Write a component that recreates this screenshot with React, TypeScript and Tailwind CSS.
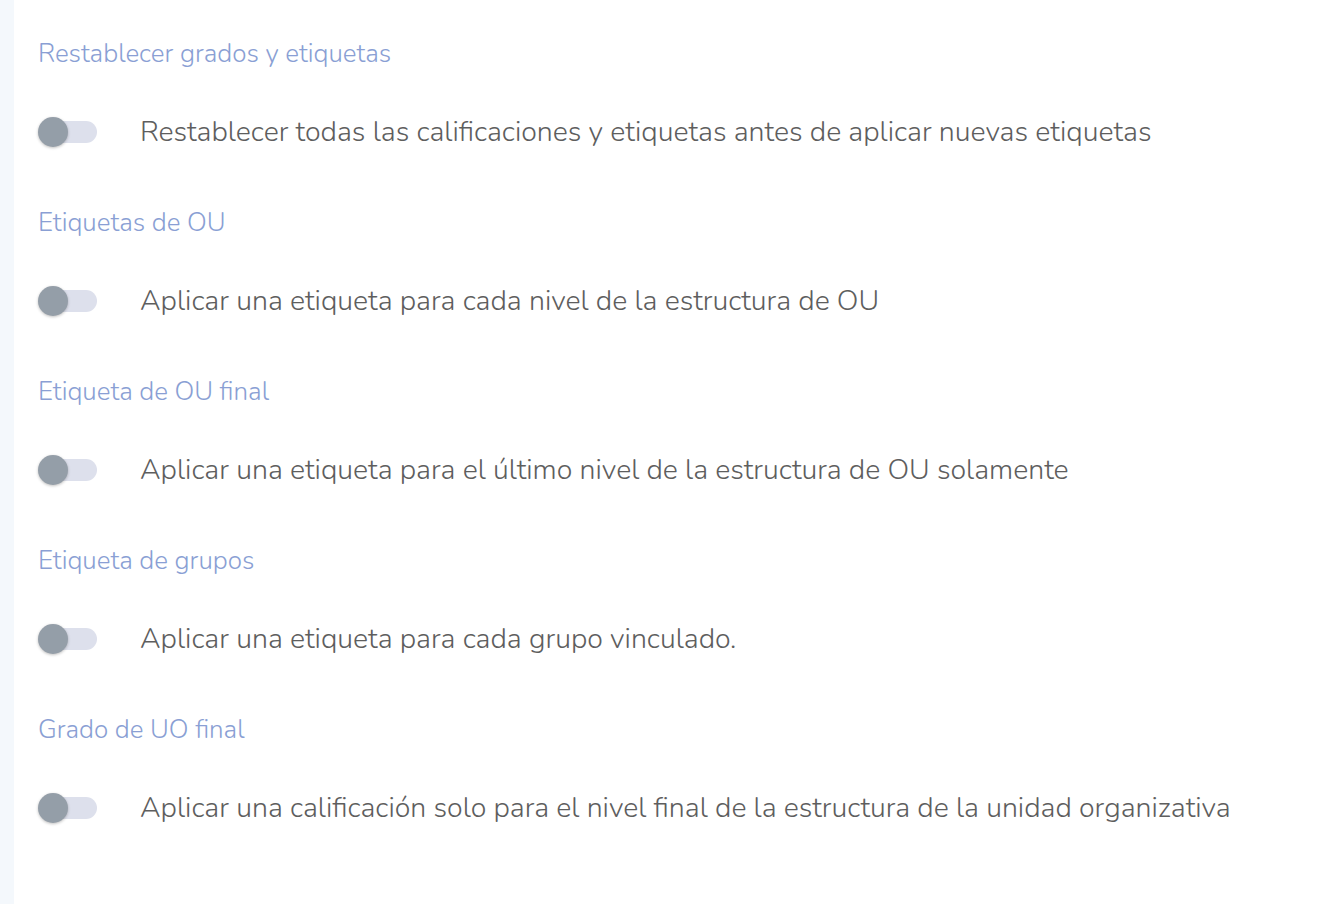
import React from "react";

const items = [
  { h: "Restablecer grados y etiquetas", d: "Restablecer todas las calificaciones y etiquetas antes de aplicar nuevas etiquetas" },
  { h: "Etiquetas de OU", d: "Aplicar una etiqueta para cada nivel de la estructura de OU" },
  { h: "Etiqueta de OU final", d: "Aplicar una etiqueta para el último nivel de la estructura de OU solamente" },
  { h: "Etiqueta de grupos", d: "Aplicar una etiqueta para cada grupo vinculado." },
  { h: "Grado de UO final", d: "Aplicar una calificación solo para el nivel final de la estructura de la unidad organizativa" },
];

function Toggle() {
  return (
    <div className="relative w-[60px] h-[30px] shrink-0">
      <div className="absolute left-[3px] right-[1px] top-[4px] h-[22px] rounded-full bg-[#dde0ec]" />
      <div className="absolute left-0 top-0 w-[30px] h-[30px] rounded-full bg-[#949ea8] shadow-[0_1px_3px_rgba(0,0,0,0.25)]" />
    </div>
  );
}

export default function App() {
  return (
    <div className="flex w-[1334px] h-[904px] bg-white overflow-hidden" style={{ fontFamily: '"Nunito", "Noto Sans", "Open Sans", sans-serif' }}>
      <div className="w-[14px] shrink-0 bg-[#f4f8fc]" />
      <div className="flex flex-col pl-[24px] pt-[37px]">
        {items.map((it) => (
          <div key={it.h} className="h-[169px] flex flex-col">
            <div className="h-[34px] leading-[34px] text-[26px] font-light text-[#8a9fd4] whitespace-nowrap">{it.h}</div>
            <div className="mt-[44px] h-[34px] flex items-center gap-[42px]">
              <Toggle />
              <div className="text-[28.5px] leading-[34px] font-light text-[#5e5e5e] whitespace-nowrap">{it.d}</div>
            </div>
          </div>
        ))}
      </div>
    </div>
  );
}
